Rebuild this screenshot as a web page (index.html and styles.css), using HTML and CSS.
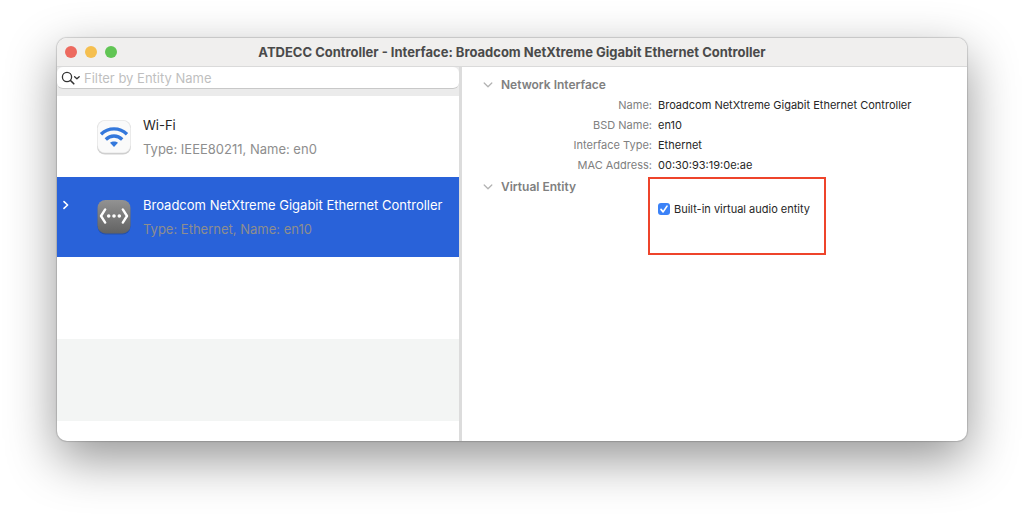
FILE: index.html
```
<!DOCTYPE html>
<html lang="en">
<head>
  <meta charset="UTF-8">
  <title>ATDECC Controller</title>
  <link rel="stylesheet" href="styles.css">
</head>
<body>

  <div class="window">
    <header class="titlebar">
      <div class="lights">
        <button type="button" class="light close" aria-label="Close"></button>
        <button type="button" class="light minimize" aria-label="Minimize"></button>
        <button type="button" class="light zoom" aria-label="Zoom"></button>
      </div>
      <h1>ATDECC Controller - Interface: Broadcom NetXtreme Gigabit Ethernet Controller</h1>
    </header>

    <div class="content">
      <aside class="sidebar">
        <div class="search-bar">
          <label class="search">
            <svg width="20" height="14" viewBox="0 0 20 14" fill="none" stroke="#333" stroke-linecap="round" stroke-linejoin="round">
              <circle cx="6" cy="6" r="4.6" stroke-width="1.3"/>
              <path d="M9.5 9.5L12.8 12.8" stroke-width="1.6"/>
              <path d="M13.6 5.7L15.9 7.8L18.2 5.7" stroke-width="1.3"/>
            </svg>
            <input type="text" placeholder="Filter by Entity Name" aria-label="Filter by Entity Name">
          </label>
        </div>

        <ul class="entities">
          <li class="entity">
            <span class="arrow"></span>
            <svg class="icon" width="36" height="36" viewBox="0 0 36 36">
              <rect x="1" y="2" width="34" height="33.5" rx="8" fill="#cfcfcf"/>
              <rect x="1" y="1" width="34" height="33" rx="8" fill="#e6e6e6"/>
              <rect x="1.8" y="1.8" width="32.4" height="31.8" rx="7.4" fill="#fafafa"/>
              <g fill="none" stroke="#3478dc" stroke-width="3.4">
                <path d="M5 15.3C12.4 8.1 23.6 8.1 31 15.3"/>
                <path d="M9.8 20.4C14.6 15.9 21.4 15.9 26.2 20.4"/>
              </g>
              <path d="M14 23.8C16.2 21.9 19.8 21.9 22 23.8L18 28Z" fill="#3478dc"/>
            </svg>
            <div class="entity-text">
              <div class="entity-name">Wi-Fi</div>
              <div class="entity-info">Type: IEEE80211, Name: en0</div>
            </div>
          </li>
          <li class="entity selected">
            <button type="button" class="arrow" aria-label="Expand">
              <svg width="6" height="10" viewBox="0 0 6 10" fill="none" stroke="#fff" stroke-width="1.6" stroke-linecap="round" stroke-linejoin="round">
                <path d="M1 1.6L4.6 5L1 8.4"/>
              </svg>
            </button>
            <svg class="icon" width="36" height="36" viewBox="0 0 36 36">
              <defs>
                <linearGradient id="metal" x1="0" y1="0" x2="0" y2="1">
                  <stop offset="0" stop-color="#929292"/>
                  <stop offset="1" stop-color="#626262"/>
                </linearGradient>
              </defs>
              <rect x="1.5" y="2" width="33" height="33.5" rx="8" fill="#2450ac"/>
              <rect x="1.5" y="1" width="33" height="33.4" rx="8" fill="url(#metal)"/>
              <g fill="none" stroke="#fff" stroke-width="2.4" stroke-linecap="round" stroke-linejoin="round">
                <path d="M9.2 10.4L5 17L9.2 23.6"/>
                <path d="M26.8 10.4L31 17L26.8 23.6"/>
              </g>
              <g fill="#fff">
                <circle cx="12.7" cy="17" r="1.8"/>
                <circle cx="18" cy="17" r="1.8"/>
                <circle cx="23.3" cy="17" r="1.8"/>
              </g>
            </svg>
            <div class="entity-text">
              <div class="entity-name">Broadcom NetXtreme Gigabit Ethernet Controller</div>
              <div class="entity-info">Type: Ethernet, Name: en10</div>
            </div>
          </li>
          <li class="blank"></li>
          <li class="blank striped"></li>
        </ul>
      </aside>

      <main class="details">
        <section>
          <h2>
            <svg width="10" height="6" viewBox="0 0 10 6" fill="none" stroke="#b4b4b4" stroke-width="1.3" stroke-linecap="round" stroke-linejoin="round">
              <path d="M1.2 1L5 4.8L8.8 1"/>
            </svg>
            Network Interface
          </h2>
          <dl class="fields">
            <dt>Name:</dt>
            <dd>Broadcom NetXtreme Gigabit Ethernet Controller</dd>
            <dt>BSD Name:</dt>
            <dd>en10</dd>
            <dt>Interface Type:</dt>
            <dd>Ethernet</dd>
            <dt>MAC Address:</dt>
            <dd>00:30:93:19:0e:ae</dd>
          </dl>
        </section>

        <section class="virtual">
          <h2>
            <svg width="10" height="6" viewBox="0 0 10 6" fill="none" stroke="#b4b4b4" stroke-width="1.3" stroke-linecap="round" stroke-linejoin="round">
              <path d="M1.2 1L5 4.8L8.8 1"/>
            </svg>
            Virtual Entity
          </h2>
          <div class="highlight">
            <label class="check">
              <input type="checkbox" checked>
              <svg width="12" height="12" viewBox="0 0 12 12" fill="none" stroke="#fff" stroke-width="1.7" stroke-linecap="round" stroke-linejoin="round">
                <path d="M3 6.4L5.1 8.9L9 3.1"/>
              </svg>
              Built-in virtual audio entity
            </label>
          </div>
        </section>
      </main>
    </div>
  </div>

</body>
</html>
```
FILE: styles.css
```
* {
  box-sizing: border-box;
}

body {
  margin: 0;
  padding: 38px 57px 75px;
  min-height: 100vh;
  display: flex;
  background: #fff;
  font-family: Inter, "Liberation Sans", sans-serif;
  font-size: 11px;
  color: #262626;
}

h1, h2, ul, dl, dd {
  margin: 0;
  padding: 0;
}

button {
  padding: 0;
  border: none;
  background: none;
}

.window {
  flex: 1;
  min-width: 0;
  display: flex;
  flex-direction: column;
  border-radius: 10px;
  overflow: hidden;
  background: #fff;
  box-shadow: 0 0 1px 1px rgba(0, 0, 0, 0.15), 0 18px 50px rgba(0, 0, 0, 0.42);
}

.titlebar {
  display: grid;
  grid-template-columns: 60px 1fr 60px;
  align-items: center;
  height: 29px;
  padding: 0 8px;
  background: #f0efee;
  border-bottom: 1px solid #dadada;
}

.titlebar h1 {
  font-size: 13px;
  line-height: 16px;
  font-weight: 700;
  text-align: center;
  color: #4a4a4a;
  white-space: nowrap;
}

.lights {
  display: flex;
  gap: 8px;
}

.light {
  width: 12px;
  height: 12px;
  border-radius: 50%;
}

.close {
  background: #ed6a5f;
}

.minimize {
  background: #f5bf4f;
}

.zoom {
  background: #61c554;
}

.content {
  flex: 1;
  display: flex;
}

.sidebar {
  width: 405px;
  flex-shrink: 0;
  border-right: 3px solid #dcdcdc;
}

.search-bar {
  padding-bottom: 7px;
  background: #ebebeb;
}

.search {
  display: flex;
  align-items: center;
  gap: 3px;
  height: 22px;
  padding: 0 4px;
  background: #fff;
  border-bottom: 1px solid #c8c8c8;
  border-radius: 6px;
}

.search input {
  flex: 1;
  padding: 0;
  border: none;
  outline: none;
  background: none;
  font-family: inherit;
  font-size: 13px;
}

.search input::placeholder {
  color: #bfbfbf;
}

.entities {
  list-style: none;
}

.entity {
  display: flex;
  align-items: center;
  height: 81px;
}

.entity.selected {
  height: 80px;
  background: #2962d9;
  color: #fff;
}

.arrow {
  width: 39px;
  padding-left: 6px;
  padding-bottom: 24px;
  text-align: left;
}

.icon {
  flex-shrink: 0;
}

.entity-text {
  margin-left: 11px;
  font-size: 13px;
  line-height: 24px;
  white-space: nowrap;
}

.entity-info {
  color: #8e8e8e;
}

.blank {
  height: 82px;
}

.striped {
  background: #f3f5f4;
}

.details {
  flex: 1;
  min-width: 0;
  padding: 8px 21px;
}

.details h2 {
  display: flex;
  align-items: center;
  gap: 8px;
  font-size: 12px;
  line-height: 20px;
  font-weight: 600;
  color: #808080;
}

.fields {
  display: grid;
  grid-template-columns: 169px 1fr;
  column-gap: 6px;
  line-height: 20px;
}

.fields dt {
  text-align: right;
  color: #808080;
}

.virtual {
  display: grid;
  grid-template-columns: 165px 1fr;
  align-items: start;
  padding-top: 2px;
}

.highlight {
  width: 178px;
  height: 78px;
  padding: 22px 8px;
  border: 2px solid #ee442b;
}

.check {
  position: relative;
  display: flex;
  align-items: center;
  gap: 4px;
  line-height: 16px;
  white-space: nowrap;
}

.check input {
  appearance: none;
  width: 12px;
  height: 12px;
  margin: 0;
  border-radius: 3px;
  background: #bbb;
}

.check input:checked {
  background: #3b82f7;
}

.check svg {
  position: absolute;
  left: 0;
  top: 2px;
  pointer-events: none;
}
```
